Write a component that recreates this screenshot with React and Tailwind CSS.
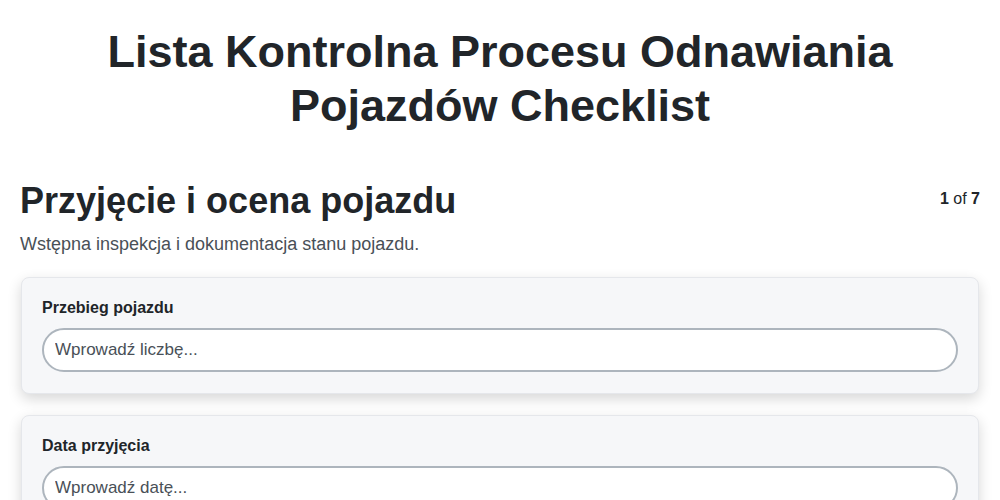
import React from 'react';

const fields = [
  { label: 'Przebieg pojazdu', placeholder: 'Wprowadź liczbę...' },
  { label: 'Data przyjęcia', placeholder: 'Wprowadź datę...' },
  { label: 'Numer VIN', placeholder: 'Wprowadź tekst...' },
];

export default function App() {
  return (
    <div className="min-h-screen bg-white px-5 text-[#212529]" style={{ fontFamily: '"Liberation Sans", Arial, sans-serif' }}>
      <h1 className="pt-[25px] text-center text-[45px] font-bold leading-[54px]">
        Lista Kontrolna Procesu Odnawiania
        <br />
        Pojazdów Checklist
      </h1>

      <div className="mt-[46px] flex items-start justify-between">
        <h2 className="text-[36px] font-bold leading-[44px]">Przyjęcie i ocena pojazdu</h2>
        <div className="pt-[8px] text-[16px]">
          <span className="font-bold">1</span> of <span className="font-bold">7</span>
        </div>
      </div>
      <p className="mt-[8px] text-[18px] text-[#495057]">Wstępna inspekcja i dokumentacja stanu pojazdu.</p>

      <div className="mt-[19px] flex flex-col gap-[21px]">
        {fields.map((f) => (
          <div
            key={f.label}
            className="mx-px rounded-lg border border-[#e5e7eb] bg-[#f6f7f9] px-5 pt-[19px] pb-[21px] shadow-[0_5px_14px_rgba(0,0,0,0.16)]"
          >
            <label className="mb-[9px] block text-[16px] font-bold leading-[22px]">{f.label}</label>
            <input
              type="text"
              placeholder={f.placeholder}
              className="block h-[44px] w-full rounded-full border-2 border-[#adb5bd] bg-white px-[11px] text-[17px] text-[#212529] placeholder:text-[#495057] outline-none"
            />
          </div>
        ))}
      </div>
    </div>
  );
}
